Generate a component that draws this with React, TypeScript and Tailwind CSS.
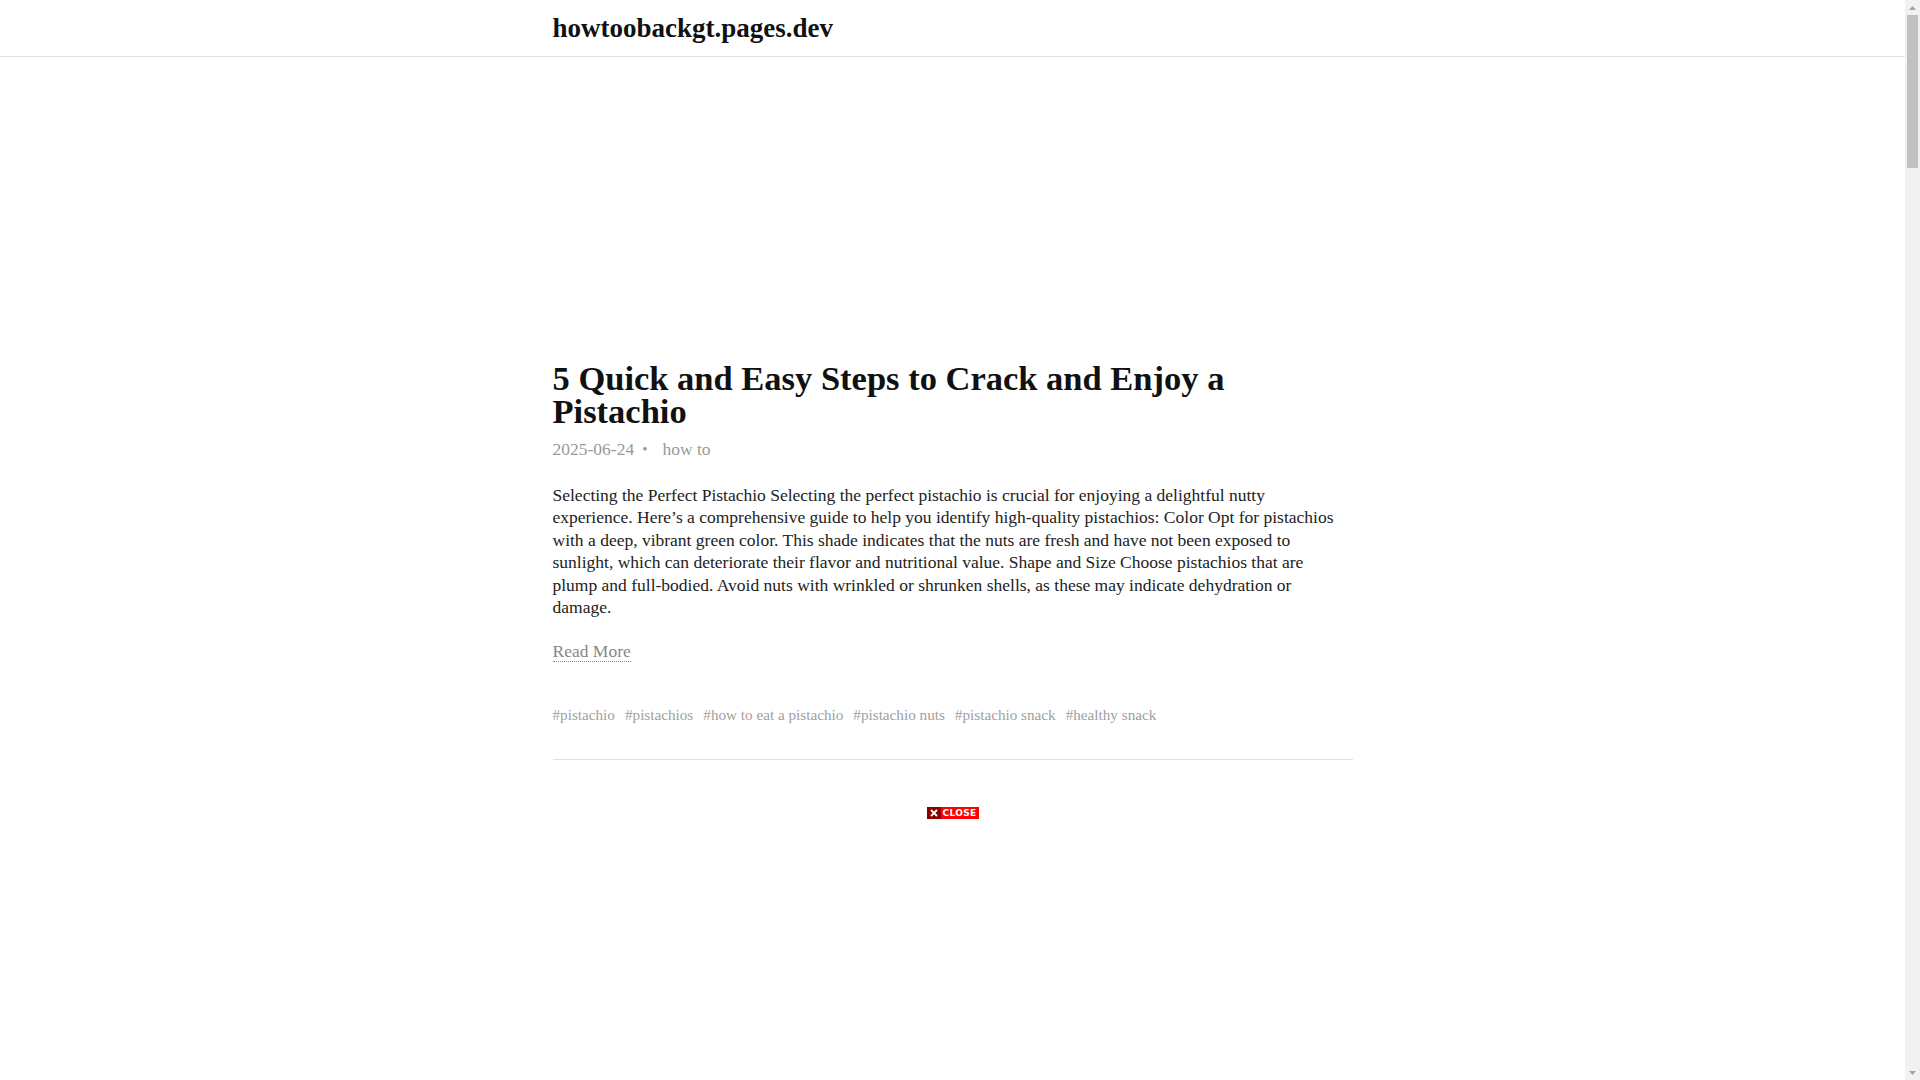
import React from 'react';

const tags = [
  'pistachio',
  'pistachios',
  'how to eat a pistachio',
  'pistachio nuts',
  'pistachio snack',
  'healthy snack',
];

// excerpt, split where the original page wraps
const bodyLines = [
  'Selecting the Perfect Pistachio Selecting the perfect pistachio is crucial for enjoying a delightful nutty',
  'experience. Here\u2019s a comprehensive guide to help you identify high-quality pistachios: Color Opt for pistachios',
  'with a deep, vibrant green color. This shade indicates that the nuts are fresh and have not been exposed to',
  'sunlight, which can deteriorate their flavor and nutritional value. Shape and Size Choose pistachios that are',
  'plump and full-bodied. Avoid nuts with wrinkled or shrunken shells, as these may indicate dehydration or',
  'damage.',
];

const CloseBar: React.FC = () => (
  <div className="flex justify-center">
    <button className="flex h-[12px] items-stretch">
      <span className="flex w-[14px] items-center justify-center bg-[#8e0000]">
        <svg width="8" height="8" viewBox="0 0 8 8">
          <path d="M1 1 L7 7 M7 1 L1 7" stroke="#fff" strokeWidth="1.8" />
        </svg>
      </span>
      <span className="flex w-[38px] items-center justify-center bg-[#ff0000] text-[9px] font-bold leading-none tracking-[0.3px] text-white [font-family:'DejaVu_Sans',sans-serif]">
        CLOSE
      </span>
    </button>
  </div>
);

const Scrollbar: React.FC = () => (
  <div className="flex w-[15px] shrink-0 flex-col bg-[#f1f1f1]">
    <div className="flex h-[15px] items-center justify-center">
      <svg width="7" height="4" viewBox="0 0 7 4">
        <path d="M0 4 L3.5 0 L7 4 Z" fill="#a3a3a3" />
      </svg>
    </div>
    <div className="mx-[2px] h-[153px] bg-[#c1c1c1]" />
    <div className="flex-1" />
    <div className="flex h-[15px] items-center justify-center">
      <svg width="7" height="4" viewBox="0 0 7 4">
        <path d="M0 0 L7 0 L3.5 4 Z" fill="#a3a3a3" />
      </svg>
    </div>
  </div>
);

export default function App() {
  return (
    <div className="flex h-[1080px] overflow-hidden bg-white text-[#222] [font-family:'Liberation_Serif',serif]">
      <div className="min-w-0 flex-1">
        <header className="h-[57px] border-b border-[#e3e3e3]">
          <div className="mx-auto flex h-full max-w-[800px] items-center">
            <a className="text-[27px] font-bold leading-none text-[#111]">howtoobackgt.pages.dev</a>
          </div>
        </header>

        <main className="mx-auto max-w-[800px]">
          {/* ad slot */}
          <div className="h-[305px]" />

          <article>
            <h1 className="text-[34.5px] font-bold leading-[33px] text-[#111]">
              5 Quick and Easy Steps to Crack and Enjoy a Pistachio
            </h1>
            <div className="mt-[10px] flex items-center text-[17.5px] leading-[22px] text-[#999]">
              <span>2025-06-24</span>
              <span className="ml-2 mr-[15px] text-[15px]">•</span>
              <span>how to</span>
            </div>

            <p className="mt-[24px] text-[17.5px] leading-[22.4px] text-[#222]">
              {bodyLines.map((l) => (
                <span key={l} className="block whitespace-nowrap">
                  {l}
                </span>
              ))}
            </p>

            <div className="mt-[22px]">
              <a className="inline-block border-b border-dotted border-[#888] text-[17.5px] leading-[20px] text-[#888]">
                Read More
              </a>
            </div>

            <div className="mt-[41px] flex flex-wrap gap-x-[10px] text-[15.2px] leading-[20px] text-[#a0a0a0]">
              {tags.map((t) => (
                <span key={t}>#{t}</span>
              ))}
            </div>
          </article>

          <hr className="mt-[34px] border-t border-[#e0e0e0]" />

          <div className="mt-[47px]">
            <CloseBar />
          </div>

          {/* ad slot */}
          <div className="h-[600px]" />
        </main>
      </div>
      <Scrollbar />
    </div>
  );
}
